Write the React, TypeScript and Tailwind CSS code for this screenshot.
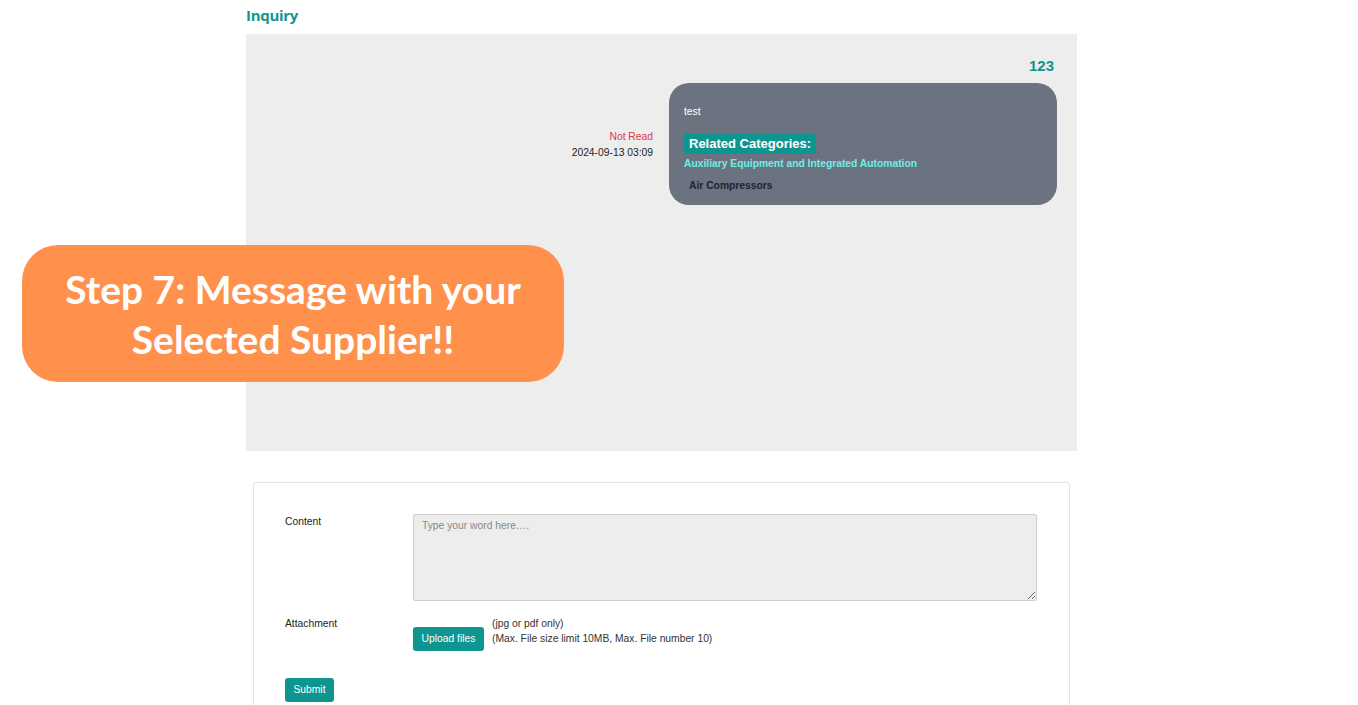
export default function App() {
  return (
    <div className="relative w-[1358px] h-[705px] overflow-hidden bg-white font-['Liberation_Sans',Arial,sans-serif] text-[#222]">
      <div className="ml-[246px] w-[831px]">
        <h1 className="h-[34px] pt-[5px] text-[15px] font-bold text-[#14958f] font-['Open_Sans',sans-serif] leading-[20px] tracking-[-0.3px]">
          Inquiry
        </h1>

        <div className="h-[417px] bg-[#ededed] pt-[23px] pr-[20px]">
          <div className="flex justify-end pr-[3px] text-[15px] font-bold text-[#12948e] leading-[18px]">123</div>
          <div className="mt-[8px] flex justify-end gap-[16px]">
            <div className="pt-[46px] text-right text-[10.3px] leading-[16px]">
              <div className="text-[#dc3545]">Not Read</div>
              <div className="text-[#222]">2024-09-13 03:09</div>
            </div>
            <div className="w-[388px] h-[122px] rounded-[20px] bg-[#6b7280] pl-[15px] pt-[22px]">
              <div className="text-[10.3px] leading-[14px] text-white">test</div>
              <div className="mt-[15px] inline-block h-[20px] bg-[#0f958f] px-[5px] text-[13px] font-bold leading-[20px] text-white">
                Related Categories:
              </div>
              <div className="mt-[2px] text-[10.3px] font-bold leading-[14px] text-[#6cf0e6]">
                Auxiliary Equipment and Integrated Automation
              </div>
              <div className="mt-[8px] pl-[5px] text-[10.3px] font-bold leading-[14px] text-[#1f2430]">Air Compressors</div>
            </div>
          </div>
        </div>

        <div className="mt-[31px] ml-[7px] w-[817px] h-[240px] rounded-[3px] border border-[#e3e3e3] bg-white pt-[31px] pl-[31px] pr-[31px]">
          <div className="flex">
            <label className="w-[128px] pt-[1px] text-[10.3px] leading-[14px]">Content</label>
            <textarea
              placeholder="Type your word here…."
              className="h-[87px] w-[624px] rounded-[2px] border border-[#cfcfcf] bg-[#ededed] px-[8px] py-[4px] text-[10.3px] leading-[14px] placeholder:text-[#888] outline-none"
            />
          </div>
          <div className="mt-[13px] flex">
            <label className="w-[128px] pt-[3px] text-[10.3px] leading-[14px]">Attachment</label>
            <button className="mt-[13px] h-[24px] w-[71px] rounded-[3px] bg-[#0f958f] text-[10.3px] text-white">Upload files</button>
            <div className="ml-[8px] pt-[2px] text-[10.3px] leading-[15px] text-[#333]">
              <div>(jpg or pdf only)</div>
              <div>(Max. File size limit 10MB, Max. File number 10)</div>
            </div>
          </div>
          <button className="mt-[27px] h-[24px] w-[49px] rounded-[3px] bg-[#0f958f] text-[10.3px] text-white">Submit</button>
        </div>
      </div>

      <div className="absolute left-[22px] top-[245px] flex h-[137px] w-[542px] items-center justify-center rounded-[36px] bg-[#ff914d]">
        <p className="text-center text-[39px] font-bold leading-[50px] text-white font-['Lato',sans-serif]">
          Step 7: Message with your
          <br />
          Selected Supplier!!
        </p>
      </div>
    </div>
  )
}
